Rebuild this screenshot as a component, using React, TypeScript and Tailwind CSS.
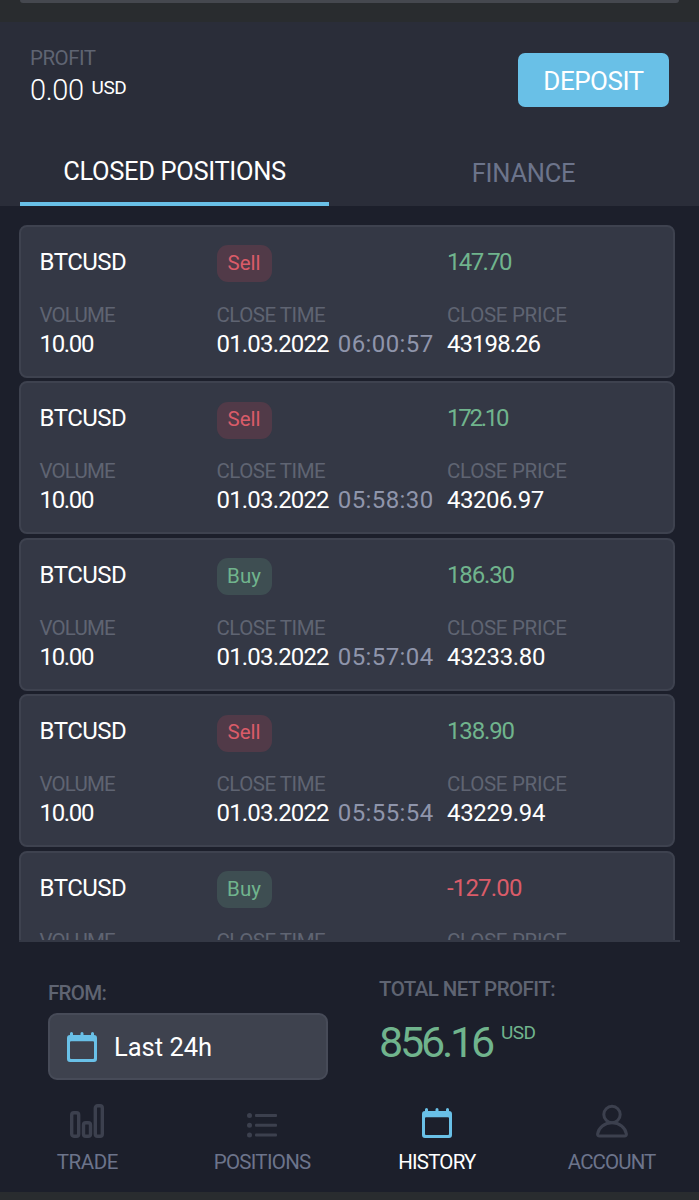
import type { ReactNode } from "react";
import clsx from "clsx";

type Position = {
  id: number;
  side: "Sell" | "Buy";
  profit: string;
  time?: string;
  price?: string;
};

const positions: Position[] = [
  { id: 1, side: "Sell", profit: "147.70", time: "06:00:57", price: "43198.26" },
  { id: 2, side: "Sell", profit: "172.10", time: "05:58:30", price: "43206.97" },
  { id: 3, side: "Buy", profit: "186.30", time: "05:57:04", price: "43233.80" },
  { id: 4, side: "Sell", profit: "138.90", time: "05:55:54", price: "43229.94" },
  { id: 5, side: "Buy", profit: "-127.00" },
];

// narrow digits (1 and 7) pull the number together
function Num({ value, className }: { value: string; className?: string }) {
  const ones = value.split("1").length - 1;
  const sevens = value.split("7").length - 1;
  const minus = value.startsWith("-") ? 3 : 0;
  const spacing = (minus - ones * 5 - sevens * 1.5) / value.length - 0.33;
  return (
    <span className={className} style={{ letterSpacing: `${spacing}px` }}>
      {value}
    </span>
  );
}

function PositionCard({ side, profit, time, price }: Position) {
  return (
    <div className="h-[153px] shrink-0 rounded-[8px] border-2 border-[#3e424f] bg-[#343845] px-[19px] pt-[18.5px] text-[24px] leading-[28px] text-white">
      <div className="grid h-[37px] grid-cols-[177px_230.5px_1fr]">
        <span className="pt-[2.5px] tracking-[-0.5px]">BTCUSD</span>
        <div>
          <span
            className={clsx(
              "inline-block h-[37px] w-[55px] rounded-[11px] pt-[4.5px] text-center text-[20.5px] leading-[26px]",
              side === "Sell" ? "bg-[#513a48] text-[#da5c69]" : "bg-[#3e4e52] text-[#70b48d]"
            )}
          >
            {side}
          </span>
        </div>
        <Num
          value={profit}
          className={clsx("pt-[2.5px]", profit.startsWith("-") ? "text-[#da5c69]" : "text-[#70b48d]")}
        />
      </div>

      <div className="mt-[20.5px] grid grid-cols-[177px_230.5px_1fr] text-[20.5px] leading-[24px] text-[#5f6472]">
        <span className="tracking-[-0.85px]">VOLUME</span>
        <span className="tracking-[-0.5px]">CLOSE TIME</span>
        <span className="tracking-[-0.3px]">CLOSE PRICE</span>
      </div>

      {time && price && (
        <div className="mt-[3px] grid grid-cols-[177px_230.5px_1fr]">
          <Num value="10.00" />
          <div className="flex gap-[9px] whitespace-nowrap">
            <Num value="01.03.2022" />
            <span className="tracking-[0.4px] text-[#8f95ab]">{time}</span>
          </div>
          <Num value={price} />
        </div>
      )}
    </div>
  );
}

function CalendarIcon() {
  return (
    <svg width="30" height="30" viewBox="0 0 30 30" fill="#69c0e7">
      <path
        fillRule="evenodd"
        d="M3 3V1.5a1.5 1.5 0 0 1 3 0V3h7.5V1.5a1.5 1.5 0 0 1 3 0V3H24V1.5a1.5 1.5 0 0 1 3 0V3a3 3 0 0 1 3 3v21a3 3 0 0 1-3 3H3a3 3 0 0 1-3-3V6a3 3 0 0 1 3-3ZM4 9.200A1 1 0 0 0 3 10.200V26A1 1 0 0 0 4 27H26A1 1 0 0 0 27 26V10.200A1 1 0 0 0 26 9.200Z"
      />
    </svg>
  );
}

function TradeIcon() {
  return (
    <svg width="34" height="34" viewBox="0 0 34 34" fill="none" stroke="#3c404e" strokeWidth="3.4">
      <rect x="1.700" y="8.700" width="7" height="23.600" rx="2.200" />
      <rect x="13.500" y="18.700" width="7" height="13.600" rx="2.200" />
      <rect x="25.300" y="1.700" width="7" height="30.600" rx="2.200" />
    </svg>
  );
}

function ListIcon() {
  return (
    <svg width="30" height="26" viewBox="0 0 30 26" fill="#3c404e">
      <circle cx="2.500" cy="3.500" r="2.500" />
      <circle cx="2.500" cy="13.300" r="2.500" />
      <circle cx="2.500" cy="23" r="2.500" />
      <rect x="8" y="2" width="22" height="3" rx="1" />
      <rect x="8" y="11.800" width="22" height="3" rx="1" />
      <rect x="8" y="21.500" width="22" height="3" rx="1" />
    </svg>
  );
}

function AccountIcon() {
  return (
    <svg width="32" height="34" viewBox="0 0 32 34" fill="none" stroke="#3c404e" strokeWidth="3">
      <circle cx="16" cy="10.500" r="8.200" />
      <path d="M1.600 30C2.600 23.500 8.500 18.800 16 18.800S29.400 23.500 30.400 30C30.500 31.300 29.800 32 28.500 32H3.500C2.200 32 1.500 31.300 1.600 30Z" />
    </svg>
  );
}

function NavItem({ icon, label, className }: { icon: ReactNode; label: string; className: string }) {
  return (
    <div className="flex flex-1 flex-col items-center">
      <div className="flex h-[34px] items-end">{icon}</div>
      <span className={clsx("mt-[12px] text-[20.5px] leading-[24px]", className)}>{label}</span>
    </div>
  );
}

export default function App() {
  return (
    <div className="flex h-[1200px] w-[699px] flex-col overflow-hidden bg-[#1c1f2b] font-['Roboto',sans-serif]">
      <div className="h-[22px] shrink-0 bg-[#292c2f] px-[20px]">
        <div className="h-[3px] rounded-b-[8px] bg-[#45484f]" />
      </div>

      <header className="flex h-[184px] shrink-0 flex-col justify-between bg-[#2a2d39]">
        <div className="flex justify-between pr-[30px] pl-[30px]">
          <div className="pt-[24px]">
            <div className="text-[20.5px] leading-[24px] tracking-[-0.5px] text-[#5f6472]">PROFIT</div>
            <div className="mt-[3px] flex gap-[8px] text-white">
              <span className="text-[29px] leading-[34px] font-light tracking-[-0.4px]">0.00</span>
              <span className="pt-[3px] text-[19px] leading-[24px] tracking-[-0.5px]">USD</span>
            </div>
          </div>
          <button className="mt-[31px] h-[54px] w-[151px] rounded-[7px] bg-[#69c0e7] pt-[2px] text-[26px] leading-[52px] tracking-[-0.5px] text-white">
            DEPOSIT
          </button>
        </div>
        <div className="flex gap-[40px] px-[20px] text-center text-[25.5px] leading-[30px]">
          <div className="h-[50px] w-[309px] border-b-4 border-[#69c0e7] tracking-[-0.35px] text-white">
            CLOSED POSITIONS
          </div>
          <div className="w-[309px] pt-[2px] tracking-[-0.25px] text-[#6c748b]">FINANCE</div>
        </div>
      </header>

      <main className="h-[736px] shrink-0 overflow-hidden pt-[18.5px] pr-[19px] pl-[18.5px]">
        <div className="flex h-[717.5px] flex-col gap-[3.5px] overflow-hidden border-b-2 border-[#343845] pr-[5px]">
          {positions.map((p) => (
            <PositionCard key={p.id} {...p} />
          ))}
        </div>
      </main>

      <section className="flex h-[162px] shrink-0 pl-[48px]">
        <div className="w-[331px] pt-[39px]">
          <div className="text-[20.5px] leading-[24px] font-medium tracking-[-0.7px] text-[#5f6472]">FROM:</div>
          <div className="mt-[8px] flex h-[67px] w-[280px] items-center gap-[17px] rounded-[9px] border-2 border-[#474b58] bg-[#3e424e] pl-[17px]">
            <CalendarIcon />
            <span className="text-[25.5px] leading-[30px] text-white">Last 24h</span>
          </div>
        </div>
        <div className="pt-[35px]">
          <div className="text-[20.5px] leading-[24px] font-medium tracking-[-0.55px] text-[#5f6472]">
            TOTAL NET PROFIT:
          </div>
          <div className="mt-[16px] flex gap-[9px] text-[#70b48d]">
            <span className="text-[43px] leading-[50px] tracking-[-3.2px]">856.16</span>
            <span className="pt-[4px] text-[19px] leading-[24px] tracking-[-0.6px]">USD</span>
          </div>
        </div>
      </section>

      <nav className="flex h-[88px] shrink-0">
        <NavItem icon={<TradeIcon />} label="TRADE" className="tracking-[-0.4px] text-[#6c748b]" />
        <NavItem icon={<ListIcon />} label="POSITIONS" className="tracking-[-0.7px] text-[#6c748b]" />
        <NavItem icon={<CalendarIcon />} label="HISTORY" className="tracking-[-0.8px] text-white" />
        <NavItem icon={<AccountIcon />} label="ACCOUNT" className="tracking-[-0.9px] text-[#6c748b]" />
      </nav>
      <div className="h-[8px] shrink-0 bg-[#292c2f]" />
    </div>
  );
}
